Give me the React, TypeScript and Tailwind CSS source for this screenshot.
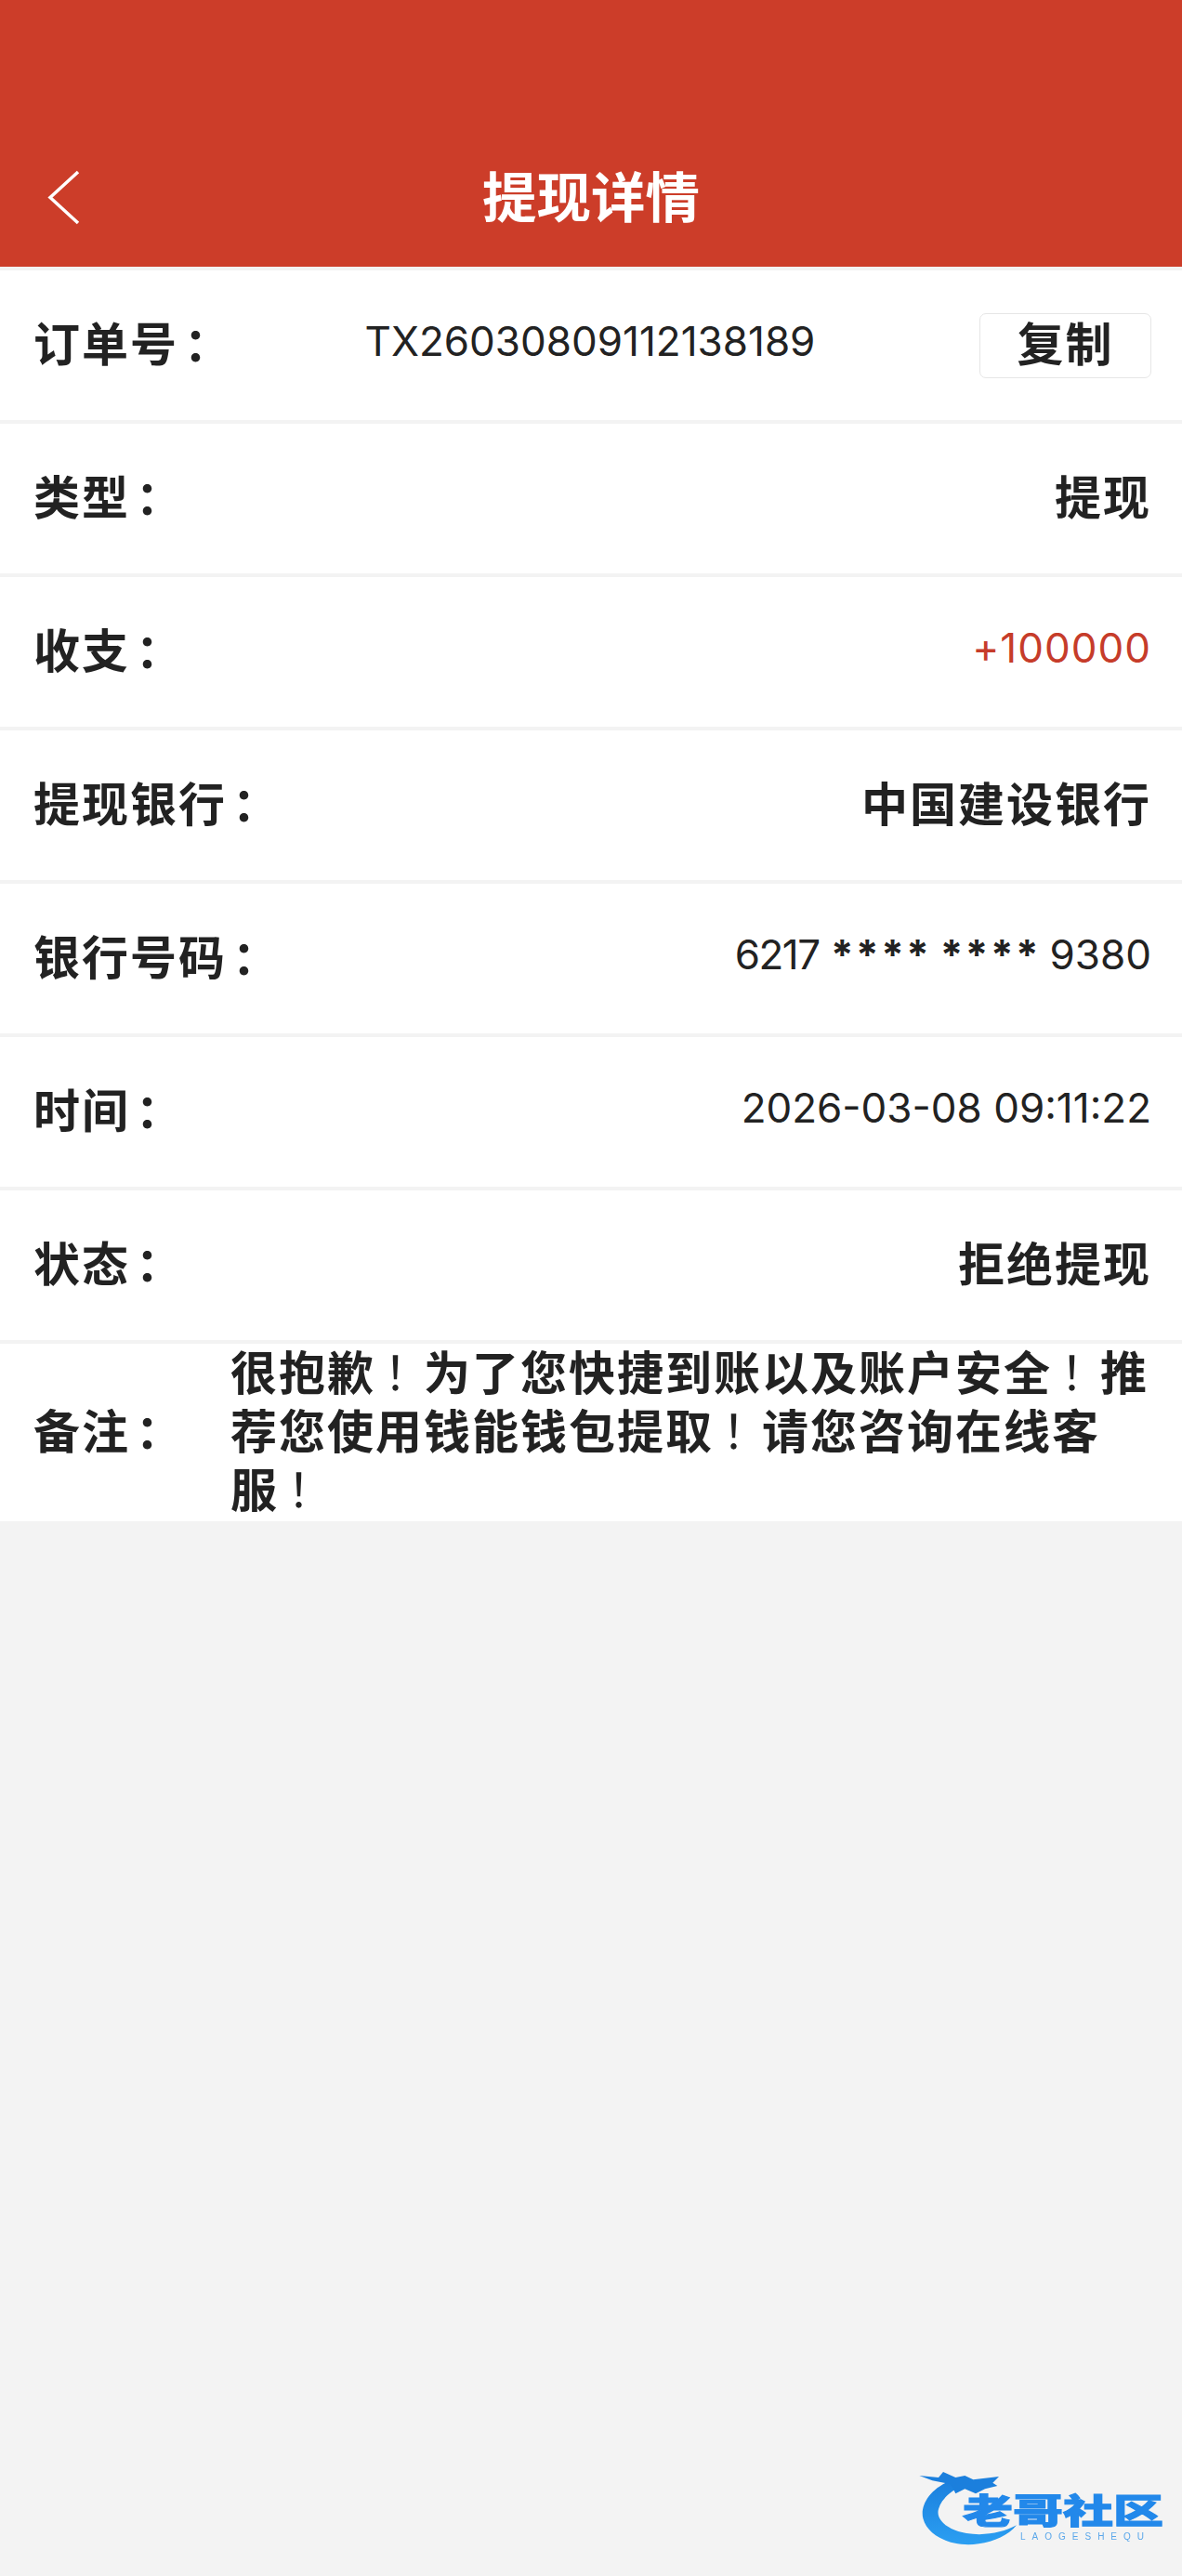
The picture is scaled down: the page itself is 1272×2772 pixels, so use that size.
const cjk = "font-['Noto_Sans_CJK_SC',sans-serif] font-bold tracking-[2px] text-[50px] leading-[63px]";
const latin = "font-['Inter','Noto_Sans_CJK_SC',sans-serif] text-[44px] leading-[63px] text-[#222222]";
const rowBox = "h-[161px] bg-white pl-[36px] pr-[33px] pb-[8px] flex items-center justify-between";

// punctuation in the reference sits further into its cell than the SC glyph does
function Colon() {
  return <span className="pl-[6px] tracking-[-6px]">：</span>;
}

function Bang() {
  return <span className="font-normal pl-[9px] tracking-[-7px]">！</span>;
}

const rows = [
  { label: '类型', value: '提现', cn: true },
  { label: '收支', value: '+100000', color: 'text-[#c63c2a] tracking-[1px]' },
  { label: '提现银行', value: '中国建设银行', cn: true },
  { label: '银行号码', card: true },
  { label: '时间', value: '2026-03-08 09:11:22' },
  { label: '状态', value: '拒绝提现', cn: true },
];

function Logo() {
  return (
    <div className="absolute left-[960px] top-[2640px] w-[312px] h-[132px] blur-[0.7px]">
      <svg width="312" height="132" viewBox="0 0 936 396" className="absolute left-0 top-0">
        <defs>
          <linearGradient id="ring" x1="0" y1="0" x2="0" y2="1">
            <stop offset="0" stopColor="#1b7fdd" />
            <stop offset="1" stopColor="#2b9ff2" />
          </linearGradient>
        </defs>
        <path d="M190 88 C120 115 90 170 100 210 C115 270 200 305 280 292 C330 285 375 265 402 232 C360 255 300 268 240 258 C180 248 140 215 150 180 C158 150 185 125 225 105 Z" fill="url(#ring)" />
        <path d="M88 72 L150 78 L165 60 L205 78 L235 72 L262 85 L345 75 L325 95 L340 105 L300 115 L270 130 L235 115 L205 130 L190 100 L130 88 Z" fill="#1b7fdd" />
      </svg>
      <div className="absolute left-[76px] top-[38px] origin-left scale-x-[1.46] font-['Noto_Sans_CJK_SC',sans-serif] font-black text-[37px] leading-[44px] text-[#2288ea] [-webkit-text-stroke:1px_#2288ea] whitespace-nowrap">
        老哥社区
      </div>
      <div className="absolute left-[138px] top-[84px] font-['Liberation_Sans',sans-serif] text-[10px] leading-[12px] tracking-[7px] text-[#5aa7ea] whitespace-nowrap">
        LAOGESHEQU
      </div>
    </div>
  );
}

export default function App() {
  return (
    <div className="relative min-h-[2772px] bg-[#f3f3f3] text-[#222222]">
      <header className="h-[287px] bg-[#cc3d29] flex items-end justify-center relative pb-[41px]">
        <svg width="36" height="60" viewBox="0 0 36 60" fill="none" className="absolute left-[51px] top-[183px]">
          <path d="M33 2 L3 29.5 L33 57" stroke="#ffffff" strokeWidth="3.5" />
        </svg>
        <h1 className="font-['Noto_Sans_CJK_SC',sans-serif] font-bold text-[58.5px] leading-[74px] text-white">提现详情</h1>
      </header>

      <div className="pt-[4px] flex flex-col gap-[4px]">
        <div className={rowBox}>
          <span className={cjk}>订单号<Colon /></span>
          <span className={`${latin} mr-[26px]`}>TX26030809112138189</span>
          <button className="w-[185px] h-[70px] mt-[8px] bg-white border border-[#e6e6e6] rounded-[7px] flex items-center justify-center">
            <span className={`${cjk} -translate-y-[4px]`}>复制</span>
          </button>
        </div>

        {rows.map(r => (
          <div key={r.label} className={rowBox}>
            <span className={cjk}>{r.label}<Colon /></span>
            {r.card ? (
              <span className={latin}>
                <span className="tracking-[-1.5px]">6217</span> <span className="font-bold tracking-[2.5px] -mr-[3px]">****</span> <span className="font-bold tracking-[2.5px] -mr-[3px]">****</span> 9380
              </span>
            ) : (
              <span className={r.cn ? cjk : `${latin} ${r.color || ''}`}>{r.value}</span>
            )}
          </div>
        ))}

        <div className="h-[191px] bg-white pl-[36px] pr-[33px] pb-[8px] flex items-center">
          <span className={`${cjk} w-[212px] shrink-0`}>备注<Colon /></span>
          <p className={`${cjk} flex-1 min-w-0`}>
            很抱歉<Bang />为了您快捷到账以及账户安全<Bang />推荐您使用钱能钱包提取<Bang />请您咨询在线客服<Bang />
          </p>
        </div>
      </div>

      <Logo />
    </div>
  );
}
